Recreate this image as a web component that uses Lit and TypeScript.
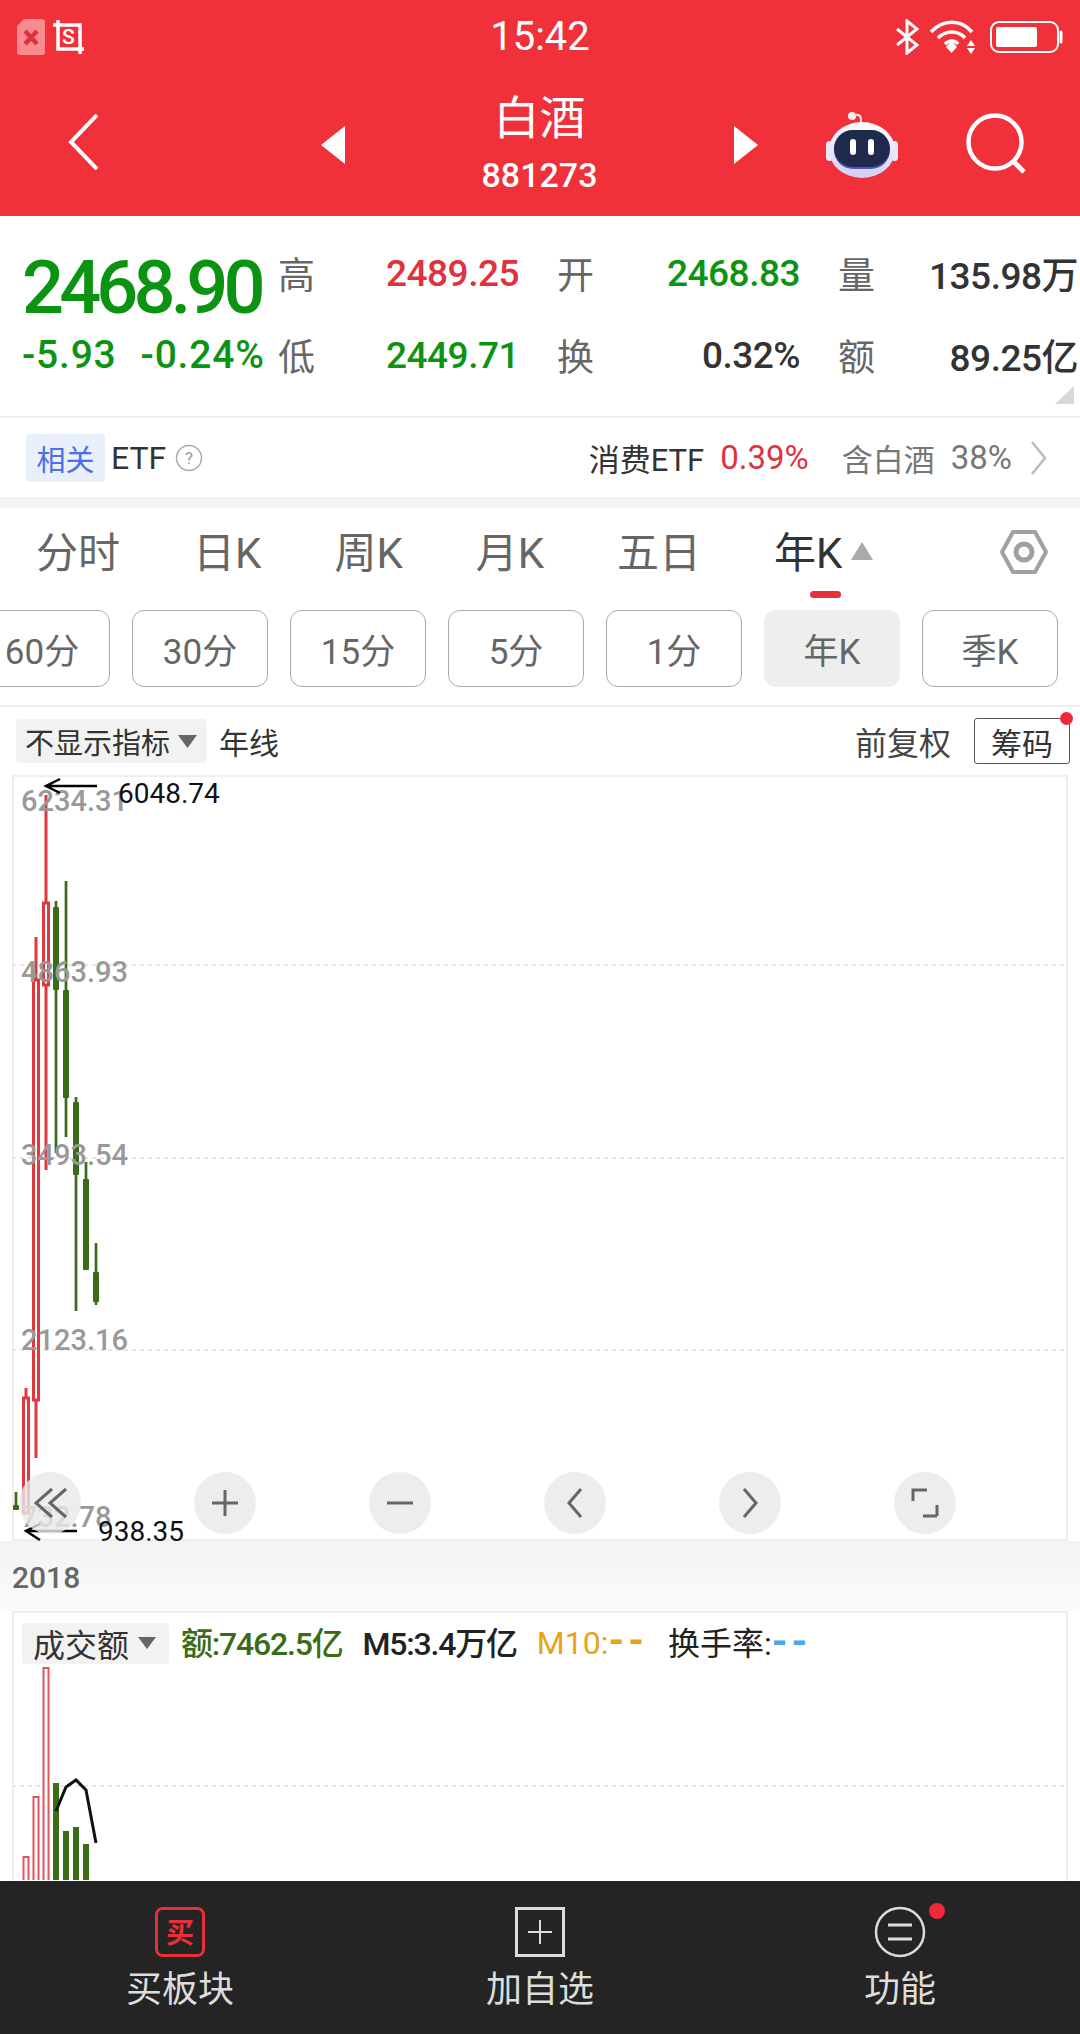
import { LitElement, html, css, svg } from 'lit';
import { customElement } from 'lit/decorators.js';

const RED = '#e0383f';
const GREEN = '#3a6b16';

// x, wick top, body top, body bottom, wick bottom (page coordinates)
const candles: [number, number, number, number, number, 'up' | 'down'][] = [
  [16, 1492, 1505, 1510, 1510, 'down'],
  [26, 1388, 1398, 1513, 1513, 'up'],
  [36, 937, 980, 1400, 1458, 'up'],
  [46, 795, 903, 985, 1170, 'up'],
  [56, 901, 907, 990, 1153, 'down'],
  [66, 881, 990, 1098, 1137, 'down'],
  [76, 1097, 1102, 1175, 1311, 'down'],
  [86, 1162, 1179, 1270, 1270, 'down'],
  [96, 1243, 1272, 1302, 1305, 'down'],
];

const priceLabels: [string, number][] = [
  ['6234.31', 811],
  ['4863.93', 982],
  ['3493.54', 1165],
  ['2123.16', 1350],
  ['732.78', 1527],
];

const volumes: [number, number, 'up' | 'down'][] = [
  [26, 1857, 'up'],
  [36, 1797, 'up'],
  [46, 1668, 'up'],
  [56, 1783, 'down'],
  [66, 1831, 'down'],
  [76, 1827, 'down'],
  [86, 1844, 'down'],
];

const periods = ['60分', '30分', '15分', '5分', '1分', '年K', '季K'];
const tabs = ['分时', '日K', '周K', '月K', '五日'];

@customElement('app-root')
export class AppRoot extends LitElement {
  static styles = css`
    :host {
      display: flex;
      flex-direction: column;
      position: relative;
      width: 1080px;
      height: 2034px;
      overflow: hidden;
      background: #fff;
      color: #333;
      font-family: Roboto, "Noto Sans CJK SC", sans-serif;
    }
    svg { display: block; flex: none; }

    .head { flex: none; height: 216px; background: #f0313a; color: #fff; }
    .status { position: relative; display: flex; align-items: center; height: 74px; }
    .time { position: absolute; left: 0; right: 0; text-align: center; font-size: 40px; line-height: 74px; }
    .status-left { display: flex; align-items: center; gap: 6px; margin-left: 17px; }
    .status-right { display: flex; align-items: center; margin-left: auto; padding-right: 16px; }
    .nav { display: flex; align-items: center; height: 142px; }
    .title { display: flex; flex-direction: column; align-items: center; width: 389px; }
    .title b { font-weight: 400; font-size: 46px; line-height: 60px; margin-top: -6px; }
    .title span { font-size: 34px; line-height: 42px; margin-top: 6px; font-weight: 500; }

    .quote { flex: none; display: flex; position: relative; height: 200px; border-bottom: 2px solid #eee; box-sizing: content-box; }
    .price { width: 278px; padding-left: 22px; box-sizing: border-box; color: #0c9312; }
    .price b { display: block; font-size: 74px; line-height: 74px; font-weight: 500; margin-top: 35px; letter-spacing: -4.9px; }
    .changes { display: flex; gap: 24px; font-size: 39px; font-weight: 500; line-height: 42px; margin-top: 9px; letter-spacing: 0.8px; white-space: nowrap; }
    .stats { display: grid; grid-template-columns: 241px 243px 240px; column-gap: 38px; grid-auto-rows: 82px; margin-top: 16px; }
    .pair { display: flex; justify-content: space-between; align-items: center; font-size: 37px; font-weight: 500; letter-spacing: -0.5px; }
    .pair i { font-style: normal; font-weight: 400; color: #666; letter-spacing: 0; }
    .up { color: #e0323c; }
    .down { color: #0c9312; }
    .corner { position: absolute; right: 6px; bottom: 12px; }

    .etf { flex: none; display: flex; align-items: center; height: 79px; font-size: 32px; padding: 0 33px 0 26px; color: #333; }
    .etf-chip {
      display: flex; align-items: center; justify-content: center;
      width: 79px; height: 48px; border-radius: 4px; background: #eaf0fb; color: #4a70e2; font-size: 29px;
    }
    .etf-name { margin-left: 6px; }
    .etf-help { margin-left: 9px; }
    .etf-right { display: flex; align-items: center; margin-left: auto; font-size: 31px; }
    .etf-pct { margin-left: 16px; color: #e0323c; font-size: 33px; }
    .etf-own { margin-left: 33px; color: #777; }
    .etf-own-pct { margin-left: 16px; color: #777; font-size: 33px; }
    .etf-more { margin-left: 18px; }
    .band { flex: none; height: 11px; background: #f5f3f3; }

    .tabs { flex: none; position: relative; display: flex; align-items: center; gap: 73px; height: 87px; padding: 0 32px 0 36px; font-size: 42px; color: #666; }
    .tabs span { line-height: 48px; margin-top: 4px; }
    .tab-on { position: relative; display: flex; align-items: center; color: #333; }
    .tab-on svg { margin-left: 9px; margin-top: -2px; }
    .tab-bar { position: absolute; left: 36px; bottom: -20px; width: 31px; height: 7px; border-radius: 4px; background: #e6303a; }
    .gear { margin-left: auto; }

    .periods { flex: none; display: flex; gap: 22px; height: 112px; margin-left: -26px; padding-top: 15px; box-sizing: border-box; }
    .period {
      flex: none; display: flex; align-items: center; justify-content: center;
      width: 136px; height: 77px; box-sizing: border-box;
      border: 1px solid #aaa; border-radius: 12px; font-size: 35px; color: #666;
    }
    .period.on { border-color: #eee; background: #eee; }
    .rule { flex: none; height: 2px; background: #eee; margin-top: -2px; }

    .indicators { flex: none; display: flex; align-items: center; height: 68px; padding: 0 10px 0 16px; font-size: 30px; color: #333; }
    .select { display: flex; align-items: center; background: #f2f2f2; border-radius: 4px; }
    .select.main { height: 44px; padding: 0 10px 0 9px; gap: 8px; font-size: 29px; }
    .line-name { margin-left: 12px; }
    .adjust { margin-left: auto; color: #444; font-size: 32px; }
    .chips { position: relative; margin-left: 23px; width: 96px; height: 46px; display: flex; align-items: center; justify-content: center; box-sizing: border-box; border: 1px solid #555; border-radius: 3px; font-size: 31px; }
    .chips::after { content: ''; position: absolute; top: -7px; right: -4px; width: 13px; height: 13px; border-radius: 50%; background: #f0283a; }

    .panel { flex: none; position: relative; margin: 0 12px; box-sizing: border-box; height: 766px; border: 2px solid #eee; }
    .canvas { position: absolute; left: -2px; top: -2px; }
    .axis { flex: none; height: 70px; padding: 3px 0 0 12px; box-sizing: border-box; display: flex; align-items: center; font-size: 30px; font-weight: 500; color: #666; background: linear-gradient(180deg, #f3f3f3, #fbfbfb); }

    .volume { flex: 1; min-height: 0; position: relative; margin: 0 12px; border: 2px solid #eee; border-bottom: 0; overflow: hidden; }
    .legend { position: relative; display: flex; align-items: center; margin: 9px 0 0 8px; font-size: 32px; color: #222; white-space: nowrap; }
    .select.vol { height: 41px; padding: 0 13px 0 11px; gap: 9px; color: #333; }
    .legend > span { margin-top: -4px; }
    .l-amt { margin-left: 12px; color: #3a6b16; font-weight: 500; letter-spacing: -1.2px; }
    .l-m5 { margin-left: 20px; letter-spacing: -1.2px; font-weight: 500; }
    .l-m10 { margin-left: 20px; color: #e8a317; }
    .l-rate { margin-left: 20px; }
    .l-blue { color: #4aa8e8; }
    .dash { font-size: 40px; line-height: 1; letter-spacing: 4px; font-weight: 700; }

    .foot { flex: none; display: grid; grid-template-columns: 360px 360px 360px; height: 153px; background: #242424; color: #ddd; font-size: 36px; }
    .foot div { display: flex; flex-direction: column; align-items: center; padding-top: 26px; }
    .foot span { line-height: 48px; margin-top: 9px; }
  `;

  private candle(c: (typeof candles)[number]) {
    const [x, wt, bt, bb, wb, dir] = c;
    if (dir === 'up') {
      return svg`
        <path d="M${x} ${wt}V${bt}M${x} ${bb}V${wb}" stroke=${RED} stroke-width="3" fill="none"/>
        <rect x=${x - 2.5} y=${bt} width="5" height=${bb - bt} fill="#fff" stroke=${RED} stroke-width="3"/>`;
    }
    return svg`
      <path d="M${x} ${wt}V${wb}" stroke=${GREEN} stroke-width="2.7" fill="none"/>
      <rect x=${x - 3} y=${bt} width="6" height=${bb - bt} rx="1" fill=${GREEN}/>`;
  }

  private chart() {
    const centers = [50, 225, 400, 575, 750, 925];
    const icon = [
      'M66 1489L50 1503L66 1517M52 1489L36 1503L52 1517',
      'M225 1490V1516M212 1503H238',
      'M387 1503H413',
      'M581 1489L569 1503L581 1517',
      'M744 1489L756 1503L744 1517',
      'M927 1490H913V1501M937 1516H923M937 1516V1505',
    ];
    return html`<svg class="canvas" width="1056" height="766" viewBox="12 775 1056 766">
      ${[965, 1158, 1350].map(
        (y) => svg`<path d="M12 ${y}H1068" stroke="#e6e6e6" stroke-width="2" stroke-dasharray="4 4"/>`,
      )}
      ${candles.map((c) => this.candle(c))}
      ${priceLabels.map(
        ([t, y]) =>
          svg`<text x="21" y=${y} font-size="29" font-weight="500" fill="#999">${t}</text>`,
      )}
      <path d="M97 786H47M60 779L46 786L60 793" stroke="#000" stroke-width="2.5" fill="none"/>
      <text x="118" y="803" font-size="28" fill="#111">6048.74</text>
      <path d="M77 1531H27M40 1524L26 1531L40 1540" stroke="#000" stroke-width="2.5" fill="none"/>
      <text x="98" y="1541" font-size="28" fill="#111">938.35</text>
      ${centers.map(
        (cx, i) => svg`
          <circle cx=${cx} cy="1503" r="31" fill="#e9e8e8" fill-opacity="0.8"/>
          <path d=${icon[i]} stroke="#666" stroke-width="3" fill="none"/>`,
      )}
    </svg>`;
  }

  private volumeBars() {
    return html`<svg class="canvas" width="1056" height="269" viewBox="12 1611 1056 269">
      <path d="M12 1786H1068" stroke="#e6e6e6" stroke-width="2" stroke-dasharray="4 4"/>
      ${volumes.map(([x, top, dir]) =>
        dir === 'up'
          ? svg`<rect x=${x - 2.5} y=${top} width="5" height=${1890 - top} fill="#fff" stroke="#e0555c" stroke-width="2"/>`
          : svg`<rect x=${x - 3} y=${top} width="6" height=${1890 - top} fill=${GREEN}/>`,
      )}
      <path d="M56 1811L66 1787L76 1780L86 1790L96 1843" stroke="#111" stroke-width="3" fill="none"/>
    </svg>`;
  }

  private robot() {
    return html`<svg width="74" height="68" viewBox="0 0 74 68" style="margin-left:67px">
      <defs>
        <linearGradient id="helm" x1="0" y1="0" x2="0" y2="1">
          <stop offset="0" stop-color="#fff"/><stop offset="1" stop-color="#cfd0f4"/>
        </linearGradient>
      </defs>
      <path d="M27 6C31 2 37 3 36 11" stroke="#f4e6ea" stroke-width="2" fill="none"/>
      <circle cx="27" cy="5" r="4" fill="#fbeef0"/>
      <rect x="1" y="30" width="7" height="20" rx="3.5" fill="#e8e8fa"/>
      <rect x="66" y="30" width="7" height="20" rx="3.5" fill="#e8e8fa"/>
      <ellipse cx="37" cy="39" rx="33" ry="28" fill="url(#helm)"/>
      <rect x="9" y="20" width="56" height="38" rx="19" fill="#5a4bc8"/>
      <rect x="9" y="19" width="56" height="37" rx="18.5" fill="#202a4c"/>
      <rect x="25" y="28" width="6" height="16" rx="3" fill="#fff"/>
      <rect x="43" y="28" width="6" height="16" rx="3" fill="#fff"/>
    </svg>`;
  }

  render() {
    return html`
      <header class="head">
        <div class="status">
          <div class="time">15:42</div>
          <div class="status-left">
            <svg width="28" height="36" viewBox="0 0 28 36">
              <path d="M7 0H25Q28 0 28 3V33Q28 36 25 36H3Q0 36 0 33V7Z" fill="#f98a90"/>
              <path d="M8 12L20 25M20 12L8 25" stroke="#dc323c" stroke-width="4.5"/>
            </svg>
            <svg width="32" height="34" viewBox="0 0 32 34" fill="none" style="margin-left:2px">
              <path d="M5 0V29H31M0 5H27V34" stroke="#fff" stroke-width="3.5"/>
              <text x="9" y="24" font-size="21" font-weight="500" fill="#fff">S</text>
            </svg>
          </div>
          <div class="status-right">
            <svg width="24" height="36" viewBox="0 0 24 36" fill="none">
              <path d="M2 10L22 26L12 34V2L22 10L2 26" stroke="#fff" stroke-width="3"/>
            </svg>
            <svg width="46" height="34" viewBox="0 0 46 34" fill="none" style="margin-left:11px">
              <path d="M1 12C13 -1 31 -1 42 12M8 18C16 10 28 10 35 18M15 24C19 20 25 20 28 24" stroke="#fff" stroke-width="3.5"/>
              <path d="M16 27L21.5 21L27 27L21.5 33Z" fill="#fff"/>
              <path d="M41 20L45 26H37ZM37 28H45L41 34Z" fill="#fff"/>
            </svg>
            <svg width="74" height="32" viewBox="0 0 74 32" fill="none" style="margin-left:14px">
              <rect x="1" y="1" width="67" height="30" rx="8" stroke="#fff" stroke-width="2"/>
              <rect x="6" y="6" width="41" height="20" rx="2" fill="#fff"/>
              <path d="M71 11V21" stroke="#fff" stroke-width="3" stroke-linecap="round"/>
            </svg>
          </div>
        </div>
        <div class="nav">
          <svg width="30" height="56" viewBox="0 0 30 56" fill="none" style="margin-left:68px;margin-top:-6px">
            <path d="M29 1L3 28L29 55" stroke="#fff" stroke-width="4"/>
          </svg>
          <svg width="24" height="38" viewBox="0 0 24 38" style="margin-left:223px"><path d="M24 0V38L0 19Z" fill="#fff"/></svg>
          <div class="title"><b>白酒</b><span>881273</span></div>
          <svg width="24" height="38" viewBox="0 0 24 38"><path d="M0 0V38L24 19Z" fill="#fff"/></svg>
          ${this.robot()}
          <svg width="60" height="66" viewBox="0 0 60 66" fill="none" style="margin-left:67px">
            <circle cx="29" cy="30" r="26.5" stroke="#fff" stroke-width="4.5"/>
            <path d="M47 49L58 60" stroke="#fff" stroke-width="5"/>
          </svg>
        </div>
      </header>

      <section class="quote">
        <div class="price">
          <b>2468.90</b>
          <div class="changes"><span>-5.93</span><span>-0.24%</span></div>
        </div>
        <div class="stats">
          <div class="pair"><i>高</i><span class="up">2489.25</span></div>
          <div class="pair"><i>开</i><span class="down">2468.83</span></div>
          <div class="pair"><i>量</i><span>135.98万</span></div>
          <div class="pair"><i>低</i><span class="down">2449.71</span></div>
          <div class="pair"><i>换</i><span>0.32%</span></div>
          <div class="pair"><i>额</i><span>89.25亿</span></div>
        </div>
        <svg class="corner" width="19" height="18" viewBox="0 0 19 18"><path d="M19 0V18H0Z" fill="#d8d8d8"/></svg>
      </section>

      <section class="etf">
        <div class="etf-chip">相关</div>
        <span class="etf-name">ETF</span>
        <svg class="etf-help" width="28" height="28" viewBox="0 0 28 28" fill="none">
          <circle cx="14" cy="14" r="12.5" stroke="#aaa" stroke-width="1.5"/>
          <text x="14" y="20" text-anchor="middle" font-size="17" fill="#999">?</text>
        </svg>
        <div class="etf-right">
          <span>消费ETF</span>
          <span class="etf-pct">0.39%</span>
          <span class="etf-own">含白酒</span>
          <span class="etf-own-pct">38%</span>
          <svg class="etf-more" width="17" height="36" viewBox="0 0 17 36" fill="none"><path d="M2 2L15 18L2 34" stroke="#bbb" stroke-width="2.5"/></svg>
        </div>
      </section>
      <div class="band"></div>

      <nav class="tabs">
        ${tabs.map((t) => html`<span>${t}</span>`)}
        <div class="tab-on">
          <span>年K</span>
          <svg width="22" height="18" viewBox="0 0 22 18"><path d="M11 0L22 18H0Z" fill="#aaa"/></svg>
          <div class="tab-bar"></div>
        </div>
        <svg class="gear" width="48" height="46" viewBox="0 0 48 46" fill="none">
          <path d="M13 3H35L46 23L35 43H13L2 23Z" stroke="#a0a0a0" stroke-width="4" stroke-linejoin="round"/>
          <circle cx="24" cy="23" r="8" stroke="#a0a0a0" stroke-width="5"/>
        </svg>
      </nav>

      <div class="periods">
        ${periods.map((p) => html`<div class="period ${p === '年K' ? 'on' : ''}">${p}</div>`)}
      </div>
      <div class="rule"></div>

      <div class="indicators">
        <div class="select main">
          <span>不显示指标</span>
          <svg width="19" height="13" viewBox="0 0 19 13"><path d="M0 0H19L9.5 13Z" fill="#666"/></svg>
        </div>
        <span class="line-name">年线</span>
        <span class="adjust">前复权</span>
        <div class="chips">筹码</div>
      </div>

      <section class="panel">${this.chart()}</section>
      <div class="axis">2018</div>

      <section class="volume">
        ${this.volumeBars()}
        <div class="legend">
          <div class="select vol">
            <span>成交额</span>
            <svg width="18" height="12" viewBox="0 0 18 12"><path d="M0 0H18L9 12Z" fill="#666"/></svg>
          </div>
          <span class="l-amt">额:7462.5亿</span>
          <span class="l-m5">M5:3.4万亿</span>
          <span class="l-m10">M10:<span class="dash">--</span></span>
          <span class="l-rate">换手率:<span class="l-blue dash">--</span></span>
        </div>
      </section>

      <footer class="foot">
        <div>
          <svg width="50" height="50" viewBox="0 0 50 50" fill="none">
            <rect x="1.5" y="1.5" width="47" height="47" rx="6" stroke="#e6303a" stroke-width="3"/>
            <text x="25" y="36" text-anchor="middle" font-size="28" font-weight="700" fill="#e6303a">买</text>
          </svg>
          <span>买板块</span>
        </div>
        <div>
          <svg width="50" height="50" viewBox="0 0 50 50" fill="none">
            <rect x="1.5" y="1.5" width="47" height="47" stroke="#ddd" stroke-width="3"/>
            <path d="M25 13V37M13 25H37" stroke="#ddd" stroke-width="2"/>
          </svg>
          <span>加自选</span>
        </div>
        <div>
          <svg width="50" height="50" viewBox="0 0 50 50" fill="none" style="overflow:visible">
            <circle cx="25" cy="25" r="24" stroke="#ddd" stroke-width="2.5"/>
            <path d="M13 18H37M13 32H37" stroke="#ddd" stroke-width="3"/>
            <circle cx="62" cy="4" r="8" fill="#f0283a"/>
          </svg>
          <span>功能</span>
        </div>
      </footer>
    `;
  }
}
